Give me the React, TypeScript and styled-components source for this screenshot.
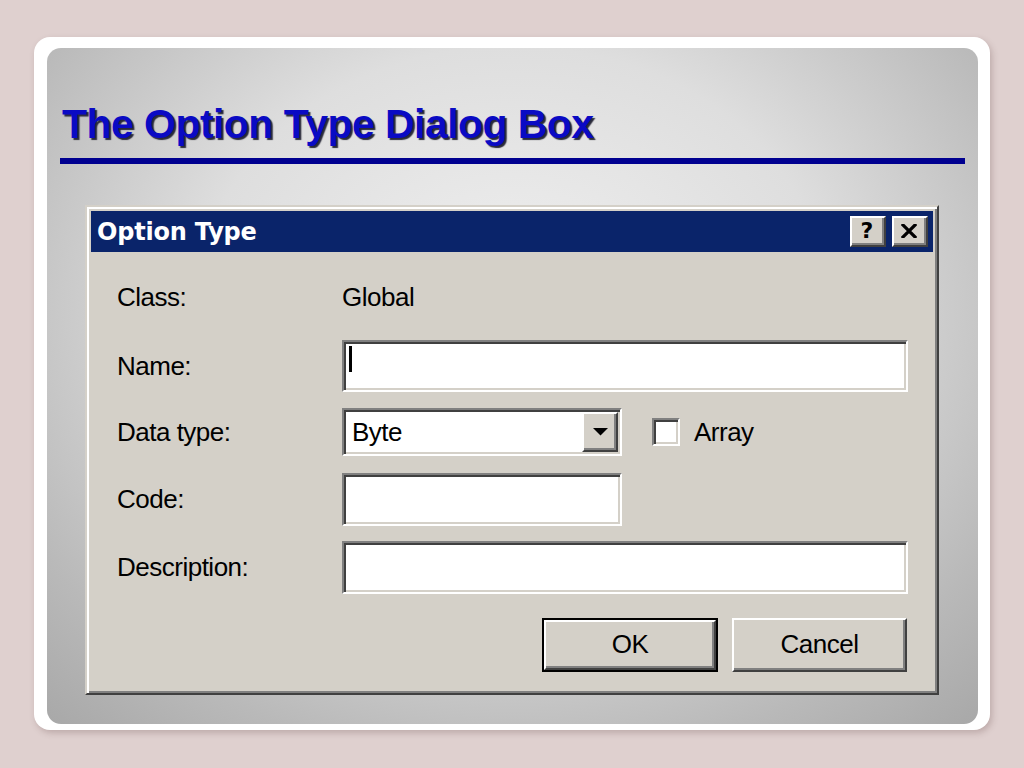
import React from "react";
import styled, { createGlobalStyle } from "styled-components";

const Global = createGlobalStyle`
  html, body { margin: 0; padding: 0; }
  body {
    background: #dfd0cf;
    width: 1024px;
    height: 768px;
    overflow: hidden;
    font-family: "Liberation Sans", Arial, sans-serif;
  }
`;

const Frame = styled.div`
  box-sizing: border-box;
  margin: 37px 0 0 34px;
  width: 956px;
  height: 693px;
  padding: 11px 12px 6px 13px;
  background: #ffffff;
  border-radius: 16px;
  box-shadow: 2px 3px 6px rgba(90, 60, 60, 0.25);
`;

const Panel = styled.div`
  box-sizing: border-box;
  height: 676px;
  border-radius: 14px;
  padding: 0 13px;
  display: flex;
  flex-direction: column;
  background: radial-gradient(
    ellipse 75% 85% at 50% 38%,
    #f0f0f0 0%,
    #dedede 45%,
    #b9b9b9 80%,
    #a7a7a7 100%
  );
`;

const Title = styled.h1`
  margin: 52px 0 0 2px;
  font-family: "Liberation Sans", Arial, sans-serif;
  font-weight: bold;
  font-size: 41px;
  letter-spacing: -0.55px;
  line-height: 48px;
  color: #0a0ac4;
  text-shadow: 2px 2px 1px #2a2a3a;
`;

const Rule = styled.div`
  margin-top: 10px;
  height: 6px;
  background: #000090;
`;

const Dialog = styled.div`
  box-sizing: border-box;
  margin: 41px 26px 0 25px;
  height: 490px;
  padding: 4px;
  background: #d4d0c8;
  border: 2px solid;
  border-color: #d4d0c8 #404040 #404040 #d4d0c8;
  box-shadow: inset 2px 2px #ffffff, inset -2px -2px #808080;
  display: flex;
  flex-direction: column;
`;

const TitleBar = styled.div`
  height: 41px;
  background: #0a246a;
  display: flex;
  align-items: center;
  padding: 0 5px 0 6px;
  gap: 6px;
`;

const TitleText = styled.div`
  flex: 1;
  color: #ffffff;
  font-family: "DejaVu Sans", Tahoma, sans-serif;
  font-weight: bold;
  font-size: 24px;
  letter-spacing: -0.2px;
`;

const Raised = `
  box-sizing: border-box;
  background: #d4d0c8;
  border: 2px solid;
  border-color: #ffffff #404040 #404040 #ffffff;
  box-shadow: inset -2px -2px #808080;
`;

const CaptionButton = styled.div`
  ${Raised}
  width: 36px;
  height: 31px;
  display: flex;
  align-items: center;
  justify-content: center;
  font-family: "DejaVu Sans", sans-serif;
  font-weight: bold;
  font-size: 22px;
  color: #000;
  padding: 0 2px 2px 0;
`;

const Body = styled.div`
  flex: 1;
  padding: 25px 24px 0 26px;
  display: flex;
  flex-direction: column;
  font-family: "Liberation Sans", Tahoma, sans-serif;
  font-size: 26px;
  letter-spacing: -0.5px;
  color: #000;
`;

const Row = styled.div<{ $top: number; $h: number }>`
  display: flex;
  align-items: center;
  margin-top: ${(p) => p.$top}px;
  height: ${(p) => p.$h}px;
`;

const Label = styled.div`
  width: 225px;
  flex: none;
`;

const Sunken = `
  box-sizing: border-box;
  background: #ffffff;
  border: 2px solid;
  border-color: #808080 #ffffff #ffffff #808080;
  box-shadow: inset 2px 2px #404040, inset -2px -2px #d4d0c8;
`;

const Field = styled.div<{ $w: number; $h: number }>`
  ${Sunken}
  width: ${(p) => p.$w}px;
  height: ${(p) => p.$h}px;
  display: flex;
  align-items: center;
  padding: 2px;
`;

const Caret = styled.span`
  width: 3px;
  height: 26px;
  background: #000;
  margin: -14px 0 0 3px;
`;

const SelectText = styled.span`
  flex: 1;
  padding-left: 6px;
`;

const DropButton = styled.div`
  ${Raised}
  width: 36px;
  height: 100%;
  display: flex;
  align-items: center;
  justify-content: center;
`;

const Check = styled.div`
  ${Sunken}
  width: 28px;
  height: 28px;
  margin-left: 30px;
`;

const CheckLabel = styled.span`
  margin-left: 14px;
`;

const Buttons = styled.div`
  display: flex;
  justify-content: flex-end;
  gap: 14px;
  margin: 24px 2px 0 0;
`;

const PushButton = styled.div<{ $default?: boolean }>`
  box-sizing: border-box;
  width: ${(p) => (p.$default ? 176 : 175)}px;
  height: 54px;
  display: flex;
  align-items: stretch;
  ${(p) => (p.$default ? "border: 2px solid #000;" : "")}
`;

const ButtonFace = styled.div`
  ${Raised}
  flex: 1;
  display: flex;
  align-items: center;
  justify-content: center;
  padding-bottom: 2px;
`;

export default function App() {
  return (
    <>
      <Global />
      <Frame>
        <Panel>
          <Title>The Option Type Dialog Box</Title>
          <Rule />
          <Dialog>
            <TitleBar>
              <TitleText>Option Type</TitleText>
              <CaptionButton>?</CaptionButton>
              <CaptionButton>
                <svg width="16" height="14" viewBox="0 0 16 14">
                  <path
                    d="M2 1 L14 13 M14 1 L2 13"
                    stroke="#000"
                    strokeWidth="3.2"
                    strokeLinecap="square"
                  />
                </svg>
              </CaptionButton>
            </TitleBar>
            <Body>
              <Row $top={0} $h={40}>
                <Label>Class:</Label>
                <span>Global</span>
              </Row>
              <Row $top={23} $h={52}>
                <Label>Name:</Label>
                <Field $w={566} $h={52}>
                  <Caret />
                </Field>
              </Row>
              <Row $top={16} $h={48}>
                <Label>Data type:</Label>
                <Field $w={280} $h={48}>
                  <SelectText>Byte</SelectText>
                  <DropButton>
                    <svg width="15" height="8" viewBox="0 0 15 8">
                      <path d="M0 0 H15 L7.5 7.5 Z" fill="#000" />
                    </svg>
                  </DropButton>
                </Field>
                <Check />
                <CheckLabel>Array</CheckLabel>
              </Row>
              <Row $top={17} $h={53}>
                <Label>Code:</Label>
                <Field $w={280} $h={53} />
              </Row>
              <Row $top={15} $h={53}>
                <Label>Description:</Label>
                <Field $w={566} $h={53} />
              </Row>
              <Buttons>
                <PushButton $default>
                  <ButtonFace>OK</ButtonFace>
                </PushButton>
                <PushButton>
                  <ButtonFace>Cancel</ButtonFace>
                </PushButton>
              </Buttons>
            </Body>
          </Dialog>
        </Panel>
      </Frame>
    </>
  );
}
